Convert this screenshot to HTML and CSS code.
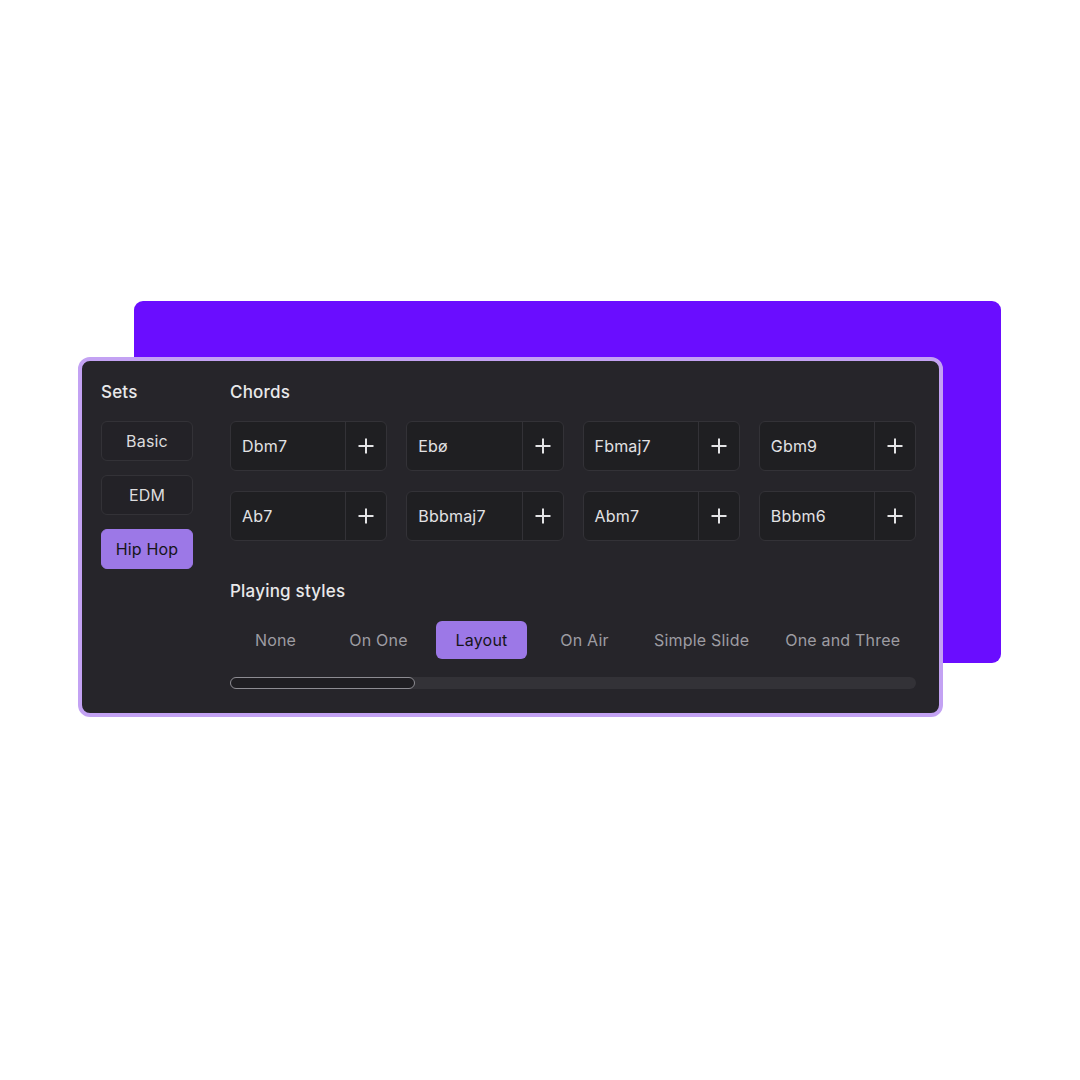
FILE: index.html
```html
<!DOCTYPE html>
<html>
<head>
<meta charset="utf-8">
<link rel="stylesheet" href="styles.css">
</head>
<body>
<div class="stage">
  <div class="backdrop"></div>
  <div class="panel">
    <div class="sets">
      <div class="title">Sets</div>
      <div class="set-list">
        <div class="set-btn">Basic</div>
        <div class="set-btn">EDM</div>
        <div class="set-btn active">Hip Hop</div>
      </div>
    </div>
    <div class="main">
      <div class="title">Chords</div>
      <div class="chords">
        <div class="chord"><span class="name">Dbm7</span><span class="add"><svg viewBox="0 0 18 18" width="18" height="18"><path d="M9 1.5v15M1.5 9h15" stroke="#e4e4e6" stroke-width="2" fill="none"/></svg></span></div>
        <div class="chord"><span class="name">Ebø</span><span class="add"><svg viewBox="0 0 18 18" width="18" height="18"><path d="M9 1.5v15M1.5 9h15" stroke="#e4e4e6" stroke-width="2" fill="none"/></svg></span></div>
        <div class="chord"><span class="name">Fbmaj7</span><span class="add"><svg viewBox="0 0 18 18" width="18" height="18"><path d="M9 1.5v15M1.5 9h15" stroke="#e4e4e6" stroke-width="2" fill="none"/></svg></span></div>
        <div class="chord"><span class="name">Gbm9</span><span class="add"><svg viewBox="0 0 18 18" width="18" height="18"><path d="M9 1.5v15M1.5 9h15" stroke="#e4e4e6" stroke-width="2" fill="none"/></svg></span></div>
        <div class="chord"><span class="name">Ab7</span><span class="add"><svg viewBox="0 0 18 18" width="18" height="18"><path d="M9 1.5v15M1.5 9h15" stroke="#e4e4e6" stroke-width="2" fill="none"/></svg></span></div>
        <div class="chord"><span class="name">Bbbmaj7</span><span class="add"><svg viewBox="0 0 18 18" width="18" height="18"><path d="M9 1.5v15M1.5 9h15" stroke="#e4e4e6" stroke-width="2" fill="none"/></svg></span></div>
        <div class="chord"><span class="name">Abm7</span><span class="add"><svg viewBox="0 0 18 18" width="18" height="18"><path d="M9 1.5v15M1.5 9h15" stroke="#e4e4e6" stroke-width="2" fill="none"/></svg></span></div>
        <div class="chord"><span class="name">Bbbm6</span><span class="add"><svg viewBox="0 0 18 18" width="18" height="18"><path d="M9 1.5v15M1.5 9h15" stroke="#e4e4e6" stroke-width="2" fill="none"/></svg></span></div>
      </div>
      <div class="title styles-title">Playing styles</div>
      <div class="tabs">
        <div class="tab">None</div>
        <div class="tab">On One</div>
        <div class="tab active">Layout</div>
        <div class="tab">On Air</div>
        <div class="tab">Simple Slide</div>
        <div class="tab">One and Three</div>
      </div>
      <div class="scroll-track"><div class="scroll-thumb"></div></div>
    </div>
  </div>
</div>
</body>
</html>
```
FILE: styles.css
```css
* { box-sizing: border-box; }
html, body { margin: 0; padding: 0; background: #ffffff; }
body {
  font-family: Inter, "Noto Sans", "Liberation Sans", sans-serif;
  width: 1080px;
  height: 1080px;
  padding: 301px 0 0 78px;
}
.stage {
  position: relative;
  width: 923px;
  height: 416px;
  padding-top: 56px;
}
.backdrop {
  position: absolute;
  left: 56px;
  top: 0;
  width: 867px;
  height: 362px;
  background: #6a0dff;
  border-radius: 9px;
}
.panel {
  position: relative;
  width: 865px;
  height: 360px;
  background: #26252a;
  border: 4px solid #c3a2f3;
  border-radius: 12px;
  display: flex;
  padding: 20px 23px 0 19px;
}
.title {
  font-size: 17px;
  line-height: 22px;
  font-weight: 500;
  color: #e9e9ea;
  letter-spacing: 0.2px;
}
.sets { width: 92px; flex: none; }
.set-list {
  margin-top: 18px;
  display: flex;
  flex-direction: column;
  gap: 14px;
}
.set-btn {
  height: 40px;
  border: 1px solid #333237;
  border-radius: 6px;
  background: #232227;
  color: #dcdcde;
  font-size: 16px;
  letter-spacing: 0.2px;
  display: flex;
  align-items: center;
  justify-content: center;
}
.set-btn.active {
  background: #9c78e7;
  border-color: #9c78e7;
  color: #161519;
}
.main {
  flex: 1;
  margin-left: 37px;
}
.chords {
  margin-top: 18px;
  display: grid;
  grid-template-columns: repeat(4, 1fr);
  column-gap: 19px;
  row-gap: 20px;
}
.chord {
  height: 50px;
  display: flex;
  background: #1f1f22;
  border: 1px solid #333237;
  border-radius: 6px;
}
.chord .name {
  flex: 1;
  display: flex;
  align-items: center;
  padding-left: 11px;
  color: #e2e2e4;
  font-size: 16px;
  letter-spacing: 0.2px;
}
.chord .add {
  width: 41px;
  flex: none;
  border-left: 1px solid #333237;
  display: flex;
  align-items: center;
  justify-content: center;
}
.styles-title { margin-top: 39px; }
.tabs {
  margin-top: 19px;
  display: flex;
  gap: 12px;
}
.tab {
  height: 38px;
  min-width: 91px;
  padding: 0 12px;
  border-radius: 6px;
  display: flex;
  align-items: center;
  justify-content: center;
  font-size: 16px;
  letter-spacing: 0.2px;
  color: #9d9ca2;
  white-space: nowrap;
}
.tab.active {
  background: #9c78e7;
  color: #161519;
}
.scroll-track {
  margin-top: 18px;
  height: 12px;
  background: #333237;
  border-radius: 6px;
}
.scroll-thumb {
  width: 185px;
  height: 12px;
  border: 1.5px solid #8d8c92;
  background: #1f1e22;
  border-radius: 6px;
}
```
